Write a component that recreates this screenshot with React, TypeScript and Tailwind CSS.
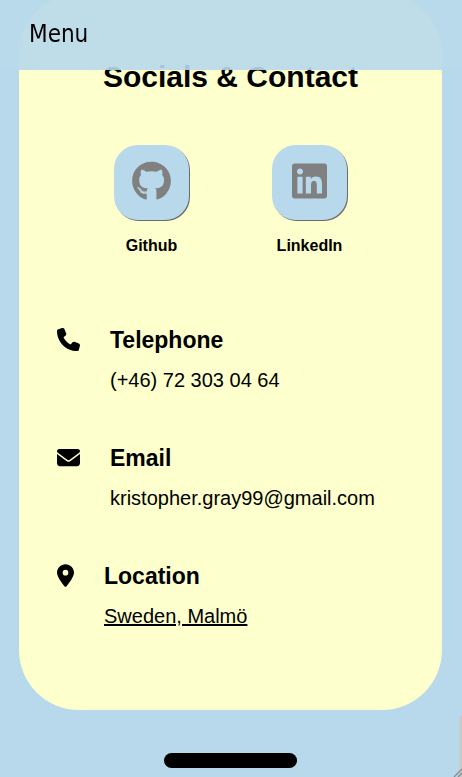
import type { ReactNode } from "react";
import {
  FaEnvelope,
  FaGithub,
  FaLinkedin,
  FaLocationDot,
  FaPhone,
} from "react-icons/fa6";

function SocialLink({ label, href, icon }: { label: string; href: string; icon: ReactNode }) {
  return (
    <a href={href} className="flex w-[75px] flex-col items-center gap-3.5">
      <span className="flex h-[75px] w-full justify-center rounded-3xl bg-[#b8d9eb] pt-4 text-[#808080] shadow-[1px_1px_0px_#6b6b6b]">
        {icon}
      </span>
      <span className="text-base leading-6 font-bold text-black">{label}</span>
    </a>
  );
}

function ContactRow({ title, icon, children }: { title: string; icon: ReactNode; children: ReactNode }) {
  return (
    <section className="flex items-start gap-[30px]">
      <span className="shrink-0 pt-0.5">{icon}</span>
      <div className="flex min-w-0 flex-col gap-3">
        <h2 className="text-[23px] leading-7 font-bold">{title}</h2>
        <p className="text-xl leading-7">{children}</p>
      </div>
    </section>
  );
}

export default function App() {
  return (
    <div className="relative flow-root min-h-screen overflow-hidden bg-[#b8d9eb] font-['Liberation_Sans',Arial,sans-serif] text-black">
      <header className="fixed inset-x-0 top-0 z-10 flex h-[70px] items-center bg-[#b8d9eb]/90 px-[29px]">
        <button
          type="button"
          className="pb-0.5 font-['DejaVu_Sans_Condensed',Tahoma,sans-serif] text-2xl leading-8"
        >
          Menu
        </button>
      </header>

      <main className="-mt-1.5 mr-5 ml-[19px]">
        <div className="rounded-[60px] bg-[#fdffcc] pt-[63px] pb-20">
          <h1 className="text-center text-3xl leading-10 font-bold">Socials &amp; Contact</h1>

          <nav className="mt-12 flex justify-center gap-[83px]" aria-label="Socials">
            <SocialLink label="Github" href="#github" icon={<FaGithub className="h-10 w-[39px]" />} />
            <SocialLink label="LinkedIn" href="#linkedin" icon={<FaLinkedin className="h-10 w-[35px]" />} />
          </nav>

          <div className="mt-[68px] flex flex-col gap-[50px] px-[38px]">
            <ContactRow title="Telephone" icon={<FaPhone className="h-[23px] w-[23px]" />}>
              (+46) 72 303 04 64
            </ContactRow>
            <ContactRow title="Email" icon={<FaEnvelope className="h-[23px] w-[23px]" />}>
              kristopher.gray99@gmail.com
            </ContactRow>
            <ContactRow title="Location" icon={<FaLocationDot className="h-[23px] w-[17px]" />}>
              <a href="#location" className="underline">
                Sweden, Malmö
              </a>
            </ContactRow>
          </div>
        </div>

        <div className="mx-auto mt-[43px] h-[15px] w-[133px] rounded-full bg-black" />
      </main>

      {/* Resize grip at the corner of the window */}
      <svg
        className="absolute right-0 bottom-0"
        width="10"
        height="61"
        viewBox="0 0 10 61"
        aria-hidden="true"
      >
        <path d="M7.5 0H10V61H7.5Z" fill="#c8c8c8" />
        <path d="M2 61L10 53M6 61L10 57" stroke="#8c8c8c" strokeWidth="1.4" />
      </svg>
    </div>
  );
}
